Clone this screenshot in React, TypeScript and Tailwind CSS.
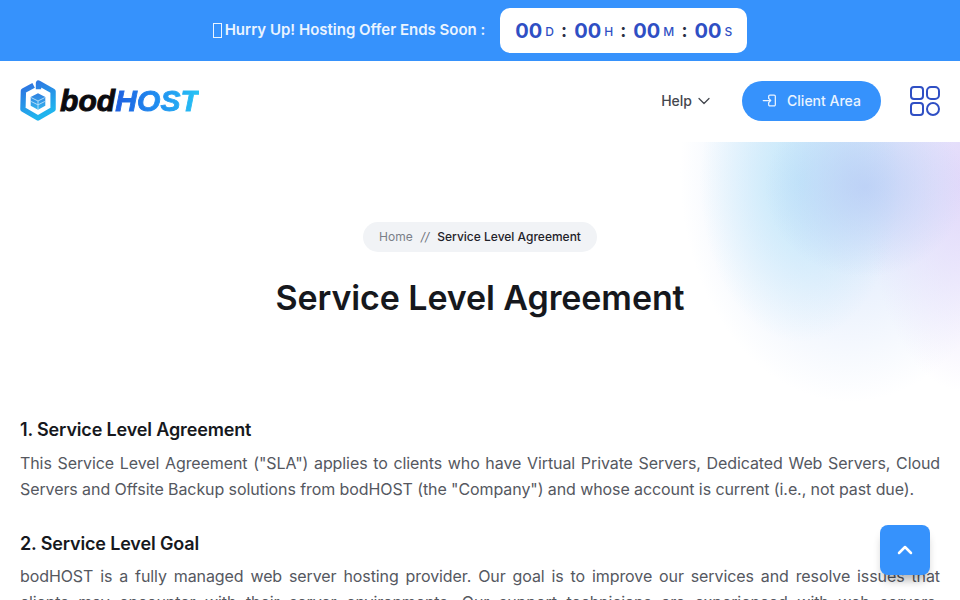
import { ChevronDown, ChevronUp } from "lucide-react";

function Logo() {
  return (
    <a href="#" className="flex items-center gap-[4px]">
      <svg width="36" height="41" viewBox="0 0 37 41" fill="none">
        <defs>
          <linearGradient id="hex" x1="0" y1="0" x2="0.4" y2="1">
            <stop offset="0" stopColor="#2f6fe0" />
            <stop offset="1" stopColor="#20b4ee" />
          </linearGradient>
          <linearGradient id="cube" x1="0" y1="0" x2="0" y2="1">
            <stop offset="0" stopColor="#2f7fe0" />
            <stop offset="1" stopColor="#35b4ee" />
          </linearGradient>
        </defs>
        <path
          d="M14 5 3.5 10.5 3 29.5 18.5 38.5 34 29.5V11L19 2.5V9"
          stroke="url(#hex)"
          strokeWidth="5.5"
          strokeLinejoin="round"
        />
        <path d="M18.5 13 26 17V26L18.5 30 11 26V17Z" fill="url(#cube)" />
        <path d="M11.5 17.5 18.5 21 25.5 17.5M18.5 21V30M11.5 21.5 18.5 25 25.5 21.5" stroke="#bfe3fa" strokeWidth="0.9" />
      </svg>
      <span className="font-['Liberation_Sans',sans-serif] text-[30px] leading-none font-black tracking-[0.1px] italic [-webkit-text-stroke:0.9px_currentColor]">
        <span className="text-[#0b0b0f]">bod</span>
        <span className="bg-[linear-gradient(90deg,#1f5fe0,#1f8df0_50%,#27c4f5)] bg-clip-text text-transparent [-webkit-text-stroke:0.9px_transparent]">
          HOST
        </span>
      </span>
    </a>
  );
}

function Count({ value, unit }: { value: string; unit: string }) {
  return (
    <div className="flex items-center gap-[3px] text-[#2f4fc4]">
      <span className="text-[20px] leading-none font-bold">{value}</span>
      <span className="mt-[2px] text-[12px] leading-none font-medium">{unit}</span>
    </div>
  );
}

function Colon() {
  return <span className="text-[18px] leading-none font-bold text-[#2a2f45]">:</span>;
}

export default function App() {
  return (
    <div className="relative h-[600px] w-[960px] overflow-hidden bg-white font-['Inter',sans-serif]">
      {/* offer bar */}
      <div className="flex h-[61px] items-center justify-center gap-[15px] bg-[#3692fc]">
        <p className="flex items-center gap-[3px] text-[15px] font-semibold text-[#eaf4ff]">
          <span className="h-[15px] w-[9px] border border-[#eaf4ff]" />
          Hurry Up! Hosting Offer Ends Soon :
        </p>
        <div className="flex h-[45px] w-[247px] items-center justify-between rounded-[10px] bg-white px-[15px]">
          <Count value="00" unit="D" />
          <Colon />
          <Count value="00" unit="H" />
          <Colon />
          <Count value="00" unit="M" />
          <Colon />
          <Count value="00" unit="S" />
        </div>
      </div>

      {/* nav */}
      <header className="flex h-[81px] items-center justify-between px-[20px] pb-[2px]">
        <Logo />
        <div className="flex items-center">
          <a href="#" className="flex items-center gap-[2px] text-[14px] font-medium text-[#44474e]">
            Help
            <ChevronDown size={20} strokeWidth={1.5} />
          </a>
          <a
            href="#"
            className="ml-[28px] flex h-[40px] w-[139px] items-center justify-center gap-[10px] rounded-full bg-[#3692fc] text-[14px] font-medium text-[#eaf4ff]"
          >
            <svg width="15" height="15" viewBox="0 0 18 18" fill="none" stroke="currentColor" strokeWidth="1.5" strokeLinecap="round" strokeLinejoin="round">
              <path d="M8 6V4a1.5 1.5 0 0 1 1.5-1.5h5A1.5 1.5 0 0 1 16 4v10a1.5 1.5 0 0 1-1.5 1.5h-5A1.5 1.5 0 0 1 8 14v-2" />
              <path d="M1.5 9h9M8 6.5 10.5 9 8 11.5" />
            </svg>
            Client Area
          </a>
          <div className="ml-[29px] grid grid-cols-2 gap-[2px]">
            <span className="h-[14px] w-[14px] rounded-[4px] border-2 border-[#2f4fc4]" />
            <span className="h-[14px] w-[14px] rounded-[5px] border-2 border-[#2f4fc4]" />
            <span className="h-[14px] w-[14px] rounded-[4px] border-2 border-[#2f4fc4]" />
            <span className="h-[14px] w-[14px] rounded-full border-2 border-[#2f4fc4]" />
          </div>
        </div>
      </header>

      {/* page title */}
      <section className="relative flex h-[259px] flex-col items-center bg-[radial-gradient(ellipse_100px_90px_at_865px_45px,rgba(185,205,245,0.8),rgba(185,205,245,0)),radial-gradient(ellipse_100px_160px_at_800px_40px,rgba(190,232,250,0.85),rgba(190,232,250,0)),radial-gradient(ellipse_100px_210px_at_965px_40px,rgba(225,215,250,0.95),rgba(225,215,250,0)),radial-gradient(ellipse_170px_230px_at_850px_30px,rgba(205,222,250,0.85),rgba(205,222,250,0))]">
        <div className="mt-[80px] flex h-[30px] items-center gap-[8px] rounded-full bg-[#f1f3f6] px-[16px] text-[12px]">
          <a href="#" className="text-[#7a7f88]">Home</a>
          <span className="text-[#6b7078] italic">//</span>
          <span className="font-medium text-[#1f2229]">Service Level Agreement</span>
        </div>
        <h1 className="mt-[22px] text-[34px] leading-[48px] font-semibold tracking-[-0.09px] text-[#16181d]">
          Service Level Agreement
        </h1>
      </section>

      {/* content */}
      <main className="px-[20px] pt-[16px]">
        <h2 className="text-[18px] leading-[26px] font-semibold tracking-[-0.15px] text-[#16181d]">
          1. Service Level Agreement
        </h2>
        <p className="mt-[7px] text-justify text-[16px] leading-[26px] tracking-[-0.09px] text-[#55585f]">
          This Service Level Agreement ("SLA") applies to clients who have Virtual Private Servers, Dedicated Web
          Servers, Cloud Servers and Offsite Backup solutions from bodHOST (the "Company") and whose account is current
          (i.e., not past due).
        </p>
        <h2 className="mt-[29px] text-[18px] leading-[26px] font-semibold tracking-[-0.15px] text-[#16181d]">
          2. Service Level Goal
        </h2>
        <p className="mt-[6px] text-justify text-[16px] leading-[26px] tracking-[-0.09px] text-[#55585f]">
          bodHOST is a fully managed web server hosting provider. Our goal is to improve our services and resolve issues
          that clients may encounter with their server environments. Our support technicians are experienced with web
          servers, troubleshooting and resolving problems around the clock.
        </p>
      </main>

      {/* back to top */}
      <button className="fixed right-[30px] bottom-[25px] flex h-[50px] w-[50px] items-center justify-center rounded-[8px] bg-[#3692fc] text-white shadow-[0_8px_10px_-3px_rgba(0,0,0,0.3)]">
        <ChevronUp size={24} strokeWidth={2.5} />
      </button>
    </div>
  );
}
